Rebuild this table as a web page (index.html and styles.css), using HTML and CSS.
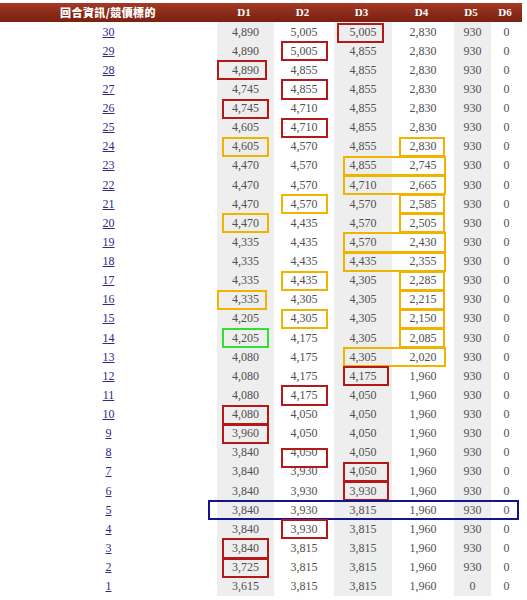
FILE: index.html
```html
<!DOCTYPE html>
<html lang="zh-Hant">
<head>
<meta charset="utf-8">
<title>回合資訊</title>
<link rel="stylesheet" href="styles.css">
</head>
<body>
<div class="table">
  <div class="row head">
    <div class="c lbl">回合資訊/競價標的</div>
    <div class="c">D1</div><div class="c">D2</div><div class="c">D3</div><div class="c">D4</div><div class="c">D5</div><div class="c">D6</div>
  </div>
  <div class="row"><div class="c lbl"><a href="#">30</a></div><div class="c g">4,890</div><div class="c">5,005</div><div class="c g">5,005<span class="box red d3 up"></span></div><div class="c">2,830</div><div class="c g">930</div><div class="c">0</div></div>
  <div class="row"><div class="c lbl"><a href="#">29</a></div><div class="c g">4,890</div><div class="c">5,005<span class="box red d2"></span></div><div class="c g">4,855</div><div class="c">2,830</div><div class="c g">930</div><div class="c">0</div></div>
  <div class="row"><div class="c lbl"><a href="#">28</a></div><div class="c g">4,890<span class="box red d1 wide"></span></div><div class="c">4,855</div><div class="c g">4,855</div><div class="c">2,830</div><div class="c g">930</div><div class="c">0</div></div>
  <div class="row"><div class="c lbl"><a href="#">27</a></div><div class="c g">4,745</div><div class="c">4,855<span class="box red d2"></span></div><div class="c g">4,855</div><div class="c">2,830</div><div class="c g">930</div><div class="c">0</div></div>
  <div class="row"><div class="c lbl"><a href="#">26</a></div><div class="c g">4,745<span class="box red d1"></span></div><div class="c">4,710</div><div class="c g">4,855</div><div class="c">2,830</div><div class="c g">930</div><div class="c">0</div></div>
  <div class="row"><div class="c lbl"><a href="#">25</a></div><div class="c g">4,605</div><div class="c">4,710<span class="box red d2"></span></div><div class="c g">4,855</div><div class="c">2,830</div><div class="c g">930</div><div class="c">0</div></div>
  <div class="row"><div class="c lbl"><a href="#">24</a></div><div class="c g">4,605<span class="box yel d1"></span></div><div class="c">4,570</div><div class="c g">4,855</div><div class="c">2,830<span class="box yel d4"></span></div><div class="c g">930</div><div class="c">0</div></div>
  <div class="row"><div class="c lbl"><a href="#">23</a></div><div class="c g">4,470</div><div class="c">4,570</div><div class="c g">4,855<span class="box yel d34"></span></div><div class="c">2,745</div><div class="c g">930</div><div class="c">0</div></div>
  <div class="row"><div class="c lbl"><a href="#">22</a></div><div class="c g">4,470</div><div class="c">4,570</div><div class="c g">4,710<span class="box yel d34"></span></div><div class="c">2,665</div><div class="c g">930</div><div class="c">0</div></div>
  <div class="row"><div class="c lbl"><a href="#">21</a></div><div class="c g">4,470</div><div class="c">4,570<span class="box yel d2"></span></div><div class="c g">4,570</div><div class="c">2,585<span class="box yel d4"></span></div><div class="c g">930</div><div class="c">0</div></div>
  <div class="row"><div class="c lbl"><a href="#">20</a></div><div class="c g">4,470<span class="box yel d1"></span></div><div class="c">4,435</div><div class="c g">4,570</div><div class="c">2,505<span class="box yel d4"></span></div><div class="c g">930</div><div class="c">0</div></div>
  <div class="row"><div class="c lbl"><a href="#">19</a></div><div class="c g">4,335</div><div class="c">4,435</div><div class="c g">4,570<span class="box yel d34"></span></div><div class="c">2,430</div><div class="c g">930</div><div class="c">0</div></div>
  <div class="row"><div class="c lbl"><a href="#">18</a></div><div class="c g">4,335</div><div class="c">4,435</div><div class="c g">4,435<span class="box yel d34"></span></div><div class="c">2,355</div><div class="c g">930</div><div class="c">0</div></div>
  <div class="row"><div class="c lbl"><a href="#">17</a></div><div class="c g">4,335</div><div class="c">4,435<span class="box yel d2"></span></div><div class="c g">4,305</div><div class="c">2,285<span class="box yel d4"></span></div><div class="c g">930</div><div class="c">0</div></div>
  <div class="row"><div class="c lbl"><a href="#">16</a></div><div class="c g">4,335<span class="box yel d1 wide"></span></div><div class="c">4,305</div><div class="c g">4,305</div><div class="c">2,215<span class="box yel d4"></span></div><div class="c g">930</div><div class="c">0</div></div>
  <div class="row"><div class="c lbl"><a href="#">15</a></div><div class="c g">4,205</div><div class="c">4,305<span class="box yel d2"></span></div><div class="c g">4,305</div><div class="c">2,150<span class="box yel d4"></span></div><div class="c g">930</div><div class="c">0</div></div>
  <div class="row"><div class="c lbl"><a href="#">14</a></div><div class="c g">4,205<span class="box grn d1"></span></div><div class="c">4,175</div><div class="c g">4,305</div><div class="c">2,085<span class="box yel d4"></span></div><div class="c g">930</div><div class="c">0</div></div>
  <div class="row"><div class="c lbl"><a href="#">13</a></div><div class="c g">4,080</div><div class="c">4,175</div><div class="c g">4,305<span class="box yel d34"></span></div><div class="c">2,020</div><div class="c g">930</div><div class="c">0</div></div>
  <div class="row"><div class="c lbl"><a href="#">12</a></div><div class="c g">4,080</div><div class="c">4,175</div><div class="c g">4,175<span class="box red d3"></span></div><div class="c">1,960</div><div class="c g">930</div><div class="c">0</div></div>
  <div class="row"><div class="c lbl"><a href="#">11</a></div><div class="c g">4,080</div><div class="c">4,175<span class="box red d2"></span></div><div class="c g">4,050</div><div class="c">1,960</div><div class="c g">930</div><div class="c">0</div></div>
  <div class="row"><div class="c lbl"><a href="#">10</a></div><div class="c g">4,080<span class="box red d1"></span></div><div class="c">4,050</div><div class="c g">4,050</div><div class="c">1,960</div><div class="c g">930</div><div class="c">0</div></div>
  <div class="row"><div class="c lbl"><a href="#">9</a></div><div class="c g">3,960<span class="box red d1"></span></div><div class="c">4,050</div><div class="c g">4,050</div><div class="c">1,960</div><div class="c g">930</div><div class="c">0</div></div>
  <div class="row"><div class="c lbl"><a href="#">8</a></div><div class="c g">3,840</div><div class="c">4,050<span class="box red d2 down"></span></div><div class="c g">4,050</div><div class="c">1,960</div><div class="c g">930</div><div class="c">0</div></div>
  <div class="row"><div class="c lbl"><a href="#">7</a></div><div class="c g">3,840</div><div class="c">3,930</div><div class="c g">4,050<span class="box red d3"></span></div><div class="c">1,960</div><div class="c g">930</div><div class="c">0</div></div>
  <div class="row"><div class="c lbl"><a href="#">6</a></div><div class="c g">3,840</div><div class="c">3,930</div><div class="c g">3,930<span class="box red d3"></span></div><div class="c">1,960</div><div class="c g">930</div><div class="c">0</div></div>
  <div class="row"><div class="c lbl"><a href="#">5</a></div><div class="c g">3,840<span class="box blu all"></span></div><div class="c">3,930</div><div class="c g">3,815</div><div class="c">1,960</div><div class="c g">930</div><div class="c">0</div></div>
  <div class="row"><div class="c lbl"><a href="#">4</a></div><div class="c g">3,840</div><div class="c">3,930<span class="box red d2"></span></div><div class="c g">3,815</div><div class="c">1,960</div><div class="c g">930</div><div class="c">0</div></div>
  <div class="row"><div class="c lbl"><a href="#">3</a></div><div class="c g">3,840<span class="box red d1"></span></div><div class="c">3,815</div><div class="c g">3,815</div><div class="c">1,960</div><div class="c g">930</div><div class="c">0</div></div>
  <div class="row"><div class="c lbl"><a href="#">2</a></div><div class="c g">3,725<span class="box red d1"></span></div><div class="c">3,815</div><div class="c g">3,815</div><div class="c">1,960</div><div class="c g">930</div><div class="c">0</div></div>
  <div class="row"><div class="c lbl"><a href="#">1</a></div><div class="c g">3,615</div><div class="c">3,815</div><div class="c g">3,815</div><div class="c">1,960</div><div class="c g">0</div><div class="c">0</div></div>
</div>
</body>
</html>
```

FILE: styles.css
```css
html, body {
  margin: 0;
  padding: 0;
  background: #ffffff;
}
body {
  font-family: "Liberation Serif", "Noto Sans CJK TC", serif;
}
.table {
  width: 522px;
  margin-top: 3px;
  display: flex;
  flex-direction: column;
}
.row {
  display: grid;
  grid-template-columns: 217px 57px 60px 58px 62px 37px 31px;
  height: 19.14px;
}
.c {
  position: relative;
  display: flex;
  align-items: center;
  justify-content: center;
  font-size: 12px;
  color: #505050;
  line-height: 1;
}
.c.g {
  background: #eeeeee;
}
.head {
  height: 19px;
  background: linear-gradient(#a53a24, #8a2a18 55%, #7a2212);
}
.head .c {
  color: #ffffff;
  font-weight: bold;
  font-size: 11px;
  padding-right: 3px;
}
.head .lbl {
  font-family: "Noto Sans CJK TC", sans-serif;
  font-weight: 900;
  letter-spacing: 0.4px;
  padding-left: 2px;
}
.lbl a {
  color: #2b2b88;
  text-decoration: underline;
  font-size: 12px;
}
.box {
  position: absolute;
  z-index: 2;
  top: 0;
  bottom: -1px;
  border: 2px solid;
  box-sizing: border-box;
}
.red { border-color: #b3191b; }
.yel { border-color: #f0b400; }
.grn { border-color: #32e032; }
.blu { border-color: #14148f; }
.d1 { left: 5px; right: 5px; }
.d1.wide { left: 0; right: 7px; }
.d2 { left: 7px; right: 6px; }
.d3 { left: 9px; right: 3px; }
.d3.up { left: 3px; right: 8px; top: 1px; bottom: -2px; }
.d4 { left: 7px; right: 9px; }
.d34 { left: 9px; right: -54px; }
.d2.down { top: 5px; bottom: -6px; }
.all { left: -9px; right: -245px; top: 0; bottom: -1px; }
```
